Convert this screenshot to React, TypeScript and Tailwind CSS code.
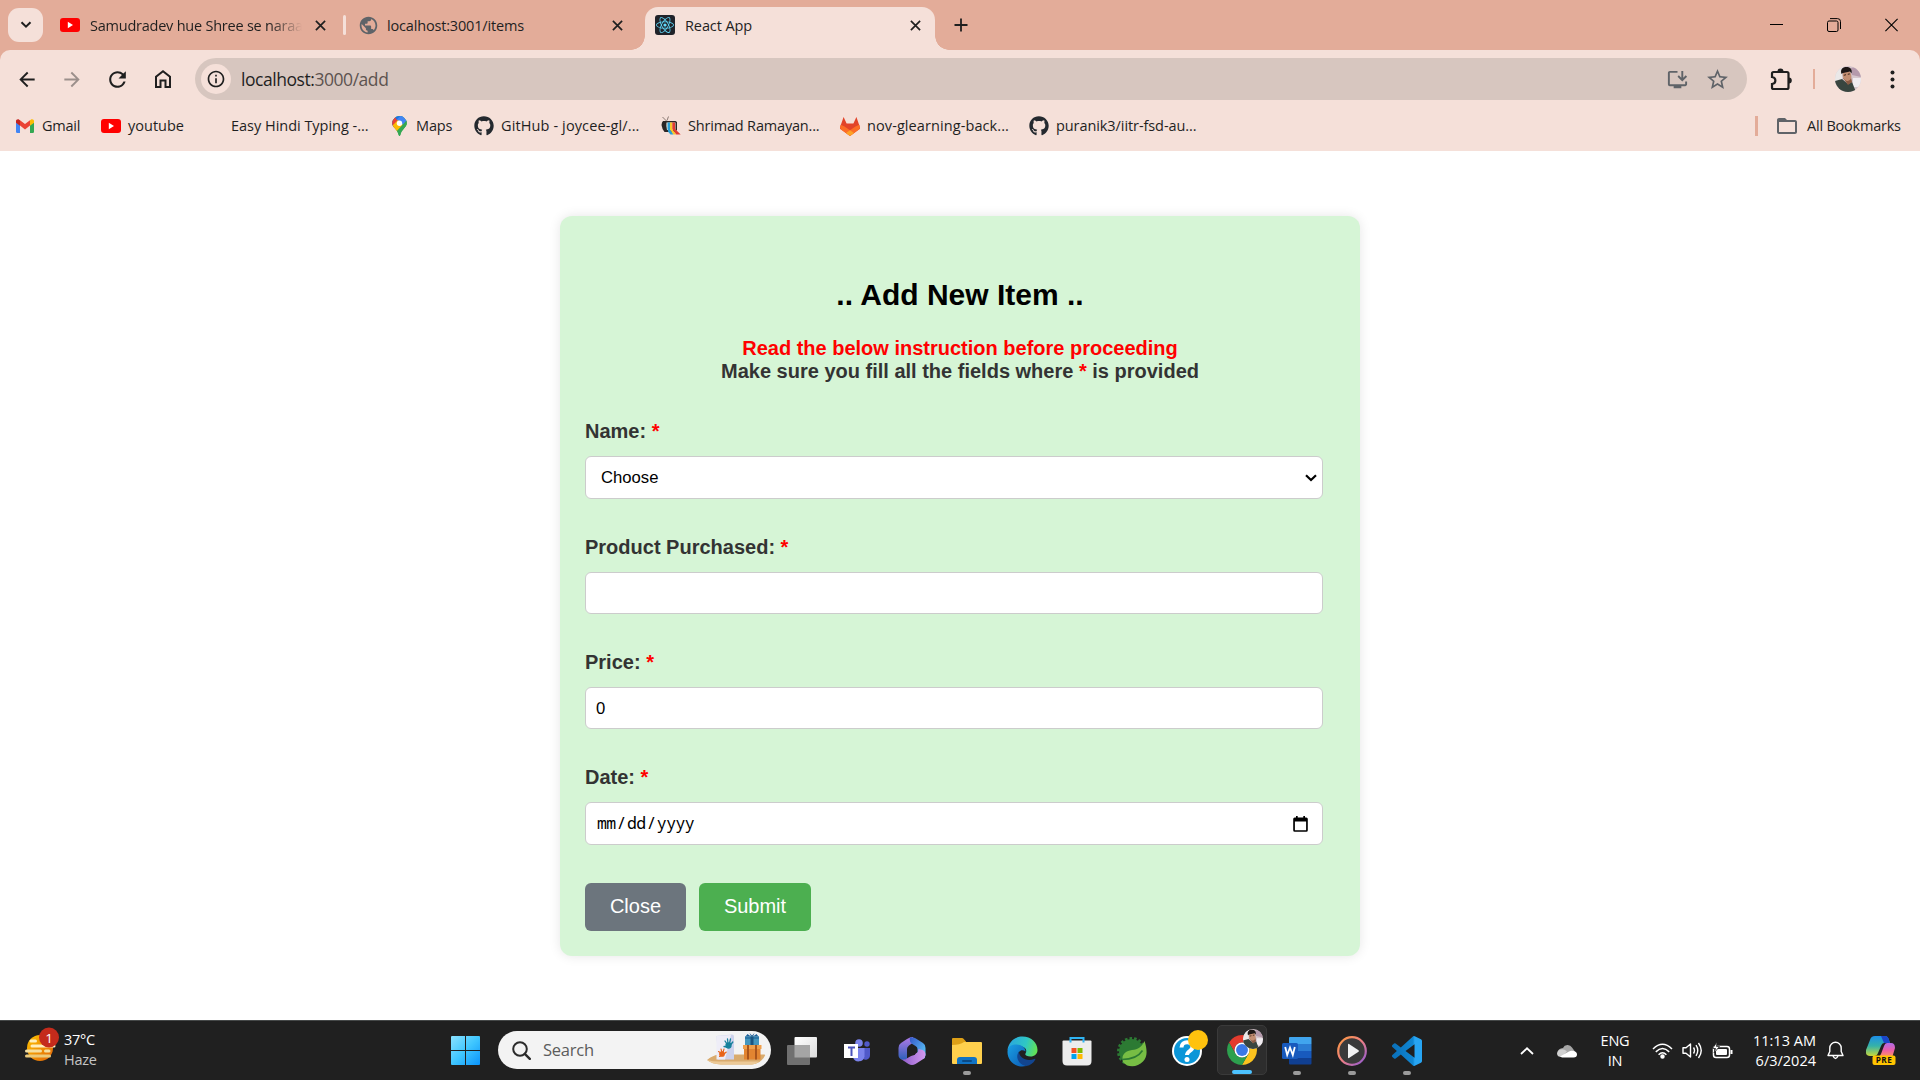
import React from "react";
import { FaGithub, FaReact } from "react-icons/fa";
import {
  MdArrowBack,
  MdArrowForward,
  MdInfoOutline,
  MdInstallDesktop,
  MdPublic,
  MdRefresh,
  MdStarBorder,
  MdFolderOpen,
} from "react-icons/md";

/* ---------- shared icons ---------- */

function YouTubeIcon() {
  return (
    <svg width="20" height="14" viewBox="0 0 20 14">
      <rect width="20" height="14" rx="3" fill="#ff0000" />
      <path d="M7.8 3.8v6.4L13 7z" fill="#fff" />
    </svg>
  );
}

function CrossIcon() {
  return (
    <svg width="11" height="11" viewBox="0 0 11 11" stroke="#1f1f1f" strokeWidth="1.7">
      <path d="M.9.9l9.2 9.2M10.1.9L.9 10.1" />
    </svg>
  );
}

function GmailIcon() {
  return (
    <svg width="18" height="14" viewBox="0 0 18 14">
      <path d="M0 3v9.8A1.2 1.2 0 0 0 1.2 14H4V6z" fill="#4285f4" />
      <path d="M18 3v9.8a1.2 1.2 0 0 1-1.2 1.2H14V6z" fill="#34a853" />
      <path d="M4 1.3v5.3l5 3.8 5-3.8V1.3L9 5.1z" fill="#ea4335" />
      <path d="M0 2.1v1.6l4 3V1.3L3.2.7C1.900-.3 0 .5 0 2.1z" fill="#c5221f" />
      <path d="M18 2.1v1.6l-4 3V1.3l.8-.6C16.100-.3 18 .5 18 2.1z" fill="#fbbc04" />
    </svg>
  );
}

function MapsIcon() {
  return (
    <svg width="15" height="20" viewBox="0 0 15 20">
      <defs>
        <clipPath id="pin">
          <path d="M7.500 0A7.300 7.300 0 0 0 .2 7.300C.2 11.500 5.600 13.500 6.600 18.800q.9 2.400 1.800 0C9.400 13.500 14.800 11.500 14.800 7.300A7.300 7.300 0 0 0 7.500 0z" />
        </clipPath>
      </defs>
      <g clipPath="url(#pin)">
        <rect width="15" height="20" fill="#34a853" />
        <path d="M-1 14L15 -2H-1z" fill="#1a73e8" />
        <path d="M4 4.500L10 -2h6v6L7 14z" fill="#4285f4" />
        <path d="M-2 0l5 1 4 6-6 7z" fill="#ea4335" />
        <path d="M-1 11L6 4l5 5-7 8z" fill="#fbbc04" />
        <path d="M3 17l12-13v16H3z" fill="#34a853" />
      </g>
      <circle cx="7.500" cy="7.200" r="2.700" fill="#fff" />
    </svg>
  );
}

function TvIcon() {
  return (
    <svg width="20" height="20" viewBox="0 0 20 20">
      <path d="M5.500 5L1.500 1M6 4.500L7.500 .5" stroke="#8a7a74" fill="none" />
      <path d="M2 5h12.500l1.500 1v8l-2 2H3.500Q1 13 .5 9 .8 6 2 5z" fill="#2b2625" />
      <path d="M5.500 6.500h9v7.500H6q-1-4-.5-7.500z" fill="#f2efe2" />
      <path d="M6.500 6.500H9V13l3.500 5.500H9.500Q6.500 16 6.500 13z" fill="#2b9fd6" />
      <path d="M9 6.500h2.300V13l4 5.500h-2.800L9 13.500z" fill="#f5c62c" />
      <path d="M11.300 6.500h2.700V13l5.700 5.500h-4.400l-4-5.500z" fill="#e03a33" />
    </svg>
  );
}

function GitLabIcon() {
  return (
    <svg width="20" height="19" viewBox="0 0 20 19">
      <path d="M3.600 0L.3 9.500 0 11.800 10 19l10-7.200-.3-2.300L16.400 0l-3 6.500H6.600z" fill="#e24329" />
      <path d="M.7 7.700q3 .8 9.300 5.500 6.300-4.700 9.300-5.500.9 2.700 0 4.500L10 19 .7 12.200q-.9-2 0-4.500z" fill="#fc6d26" />
      <path d="M10 13.200l4 2.900-4 2.900-4-2.900z" fill="#fca326" />
    </svg>
  );
}

function Portrait({ size, id }: { size: number; id: string }) {
  return (
    <svg width={size} height={size} viewBox="0 0 26 26">
      <clipPath id={id}>
        <circle cx="13" cy="13" r="13" />
      </clipPath>
      <g clipPath={`url(#${id})`}>
        <rect width="26" height="26" fill="#d5c6cd" />
        <path d="M0 0h8l-1 15H0z" fill="#eae8e8" />
        <path d="M16 2l10-2v11l-9-2z" fill="#b59aac" />
        <path d="M18 12h8v9h-8z" fill="#f0ecf0" />
        <path d="M0 15l7-2 6 5 4-2 4 10H0z" fill="#39453f" />
        <path d="M8 12l8-1 1 5-4 3z" fill="#8d5b43" />
        <ellipse cx="12" cy="9.500" rx="4.300" ry="5.500" fill="#c38e72" transform="rotate(-14 12 9.500)" />
        <path d="M6.500 8C5 3.500 7.500 1 11.500 1c4 0 6 2.500 5 6.500L15 5.500 8 7z" fill="#1d1716" />
        <path d="M8.800 9.300l2.200-.6M12.800 8.300l2-.4" stroke="#3a2219" strokeWidth="1" />
      </g>
    </svg>
  );
}

/* ---------- browser chrome ---------- */

function TabStrip() {
  return (
    <div className="flex h-[50px] bg-[#e3ac99] text-[14.5px] leading-[20px] text-[#1f1f1f]">
      <div className="ml-2 mt-2 flex h-[34px] w-[35px] items-center justify-center rounded-[11px] bg-[#f5e0d9]">
        <svg width="12" height="8" viewBox="0 0 12 8" fill="none" stroke="#1f1f1f" strokeWidth="2">
          <path d="M1.500 1.200L6 5.700l4.500-4.500" />
        </svg>
      </div>
      <div className="ml-[17px] flex w-[283px] items-center">
        <YouTubeIcon />
        <div className="ml-[10px] w-[212px] whitespace-nowrap pt-[2px] tracking-[-0.23px] [mask-image:linear-gradient(to_right,black_180px,transparent_212px)]">
          Samudradev hue Shree se naraa
        </div>
        <div className="ml-[13px]">
          <CrossIcon />
        </div>
      </div>
      <div className="mt-[15px] h-5 w-[3px] rounded-sm bg-[#f5e0d9]" />
      <div className="ml-[12px] flex w-[287px] items-center">
        <MdPublic size={21} color="#5f6368" />
        <div className="ml-[8px] w-[225px] whitespace-nowrap pt-[2px] tracking-[-0.17px]">localhost:3001/items</div>
        <CrossIcon />
      </div>
      <div className="flex h-[50px] items-end">
        <div className="-ml-[14px] h-[14px] w-[14px] bg-[radial-gradient(circle_at_0_0,transparent_13.500px,#f5e0d9_14px)]" />
        <div className="flex h-[43px] w-[290px] items-center rounded-t-[13px] bg-[#f5e0d9] pb-[7px]">
          <div className="ml-[10px] flex h-5 w-5 items-center justify-center rounded-[3px] bg-[#20232a]">
            <FaReact size={18} color="#61dafb" />
          </div>
          <div className="ml-[10px] w-[225px] pt-[2px] tracking-[-0.1px]">React App</div>
          <CrossIcon />
        </div>
        <div className="h-[14px] w-[14px] bg-[radial-gradient(circle_at_100%_0,transparent_13.500px,#f5e0d9_14px)]" />
      </div>
      <svg className="mt-[18px] ml-[5px]" width="14" height="14" viewBox="0 0 14 14" stroke="#1f1f1f" strokeWidth="1.800">
        <path d="M7 .5v13M.5 7h13" />
      </svg>
      <div className="ml-auto mr-[22px] flex items-center gap-[44px]">
        <svg width="13" height="14" viewBox="0 0 13 14" stroke="#000">
          <path d="M0 6.500h13" />
        </svg>
        <svg width="14" height="14" viewBox="0 0 14 14" fill="none" stroke="#000">
          <rect x=".5" y="3" width="10.500" height="10.500" rx="1.500" />
          <path d="M3 .6h7.500a3 3 0 0 1 3 3V11" />
        </svg>
        <svg width="13" height="14" viewBox="0 0 13 14" stroke="#000" strokeWidth="1.100">
          <path d="M.4.9l12.200 12.200M12.600.9L.4 13.100" />
        </svg>
      </div>
    </div>
  );
}

function Toolbar() {
  return (
    <div className="flex h-[58px] items-center text-[#1f1f1f]">
      <div className="flex w-[195px] items-center pl-[15px]">
        <MdArrowBack size={23} className="w-[24px]" />
        <MdArrowForward size={23} className="ml-[21px] w-[24px] text-[#9b8f8b]" />
        <MdRefresh size={25} className="ml-[21px]" />
        <svg className="ml-[24px]" width="18" height="20" viewBox="0 0 18 20" fill="none" stroke="#1f1f1f" strokeWidth="2">
          <path d="M2 18V7.700L9 2.200l7 5.500V18h-4.500v-6.500h-5V18z" />
        </svg>
      </div>
      <div className="flex h-[42px] w-[1552px] items-center rounded-full bg-[#d7c6bf] pl-[6px]">
        <div className="flex h-[30px] w-[30px] items-center justify-center rounded-full bg-[#f5e0d9]">
          <MdInfoOutline size={20} />
        </div>
        <div className="ml-[10px] text-[17.500px] tracking-[-0.450px]">
          localhost:<span className="text-[#5d5350]">3000/add</span>
        </div>
        <div className="ml-auto mr-[17px] flex items-center gap-[16px] text-[#5f6368]">
          <MdInstallDesktop size={23} />
          <MdStarBorder size={25} />
        </div>
      </div>
      <svg className="ml-[23px]" width="23" height="23" viewBox="0 0 23 23" fill="none" stroke="#1f1f1f" strokeWidth="2.200">
        <path d="M3.500 4h13.500a1.500 1.500 0 0 1 1.500 1.500v14a1.500 1.500 0 0 1-1.500 1.500H3.500A1.500 1.500 0 0 1 2 19.500V16c4.500-.5 4.500-6.500 0-7V5.500A1.500 1.500 0 0 1 3.500 4z" />
        <path d="M7.500 3.500a3 3 0 0 1 6 0zM18.800 9.500a3 3 0 0 1 0 6z" fill="#1f1f1f" stroke="none" />
      </svg>
      <div className="ml-[20px] h-5 w-[2px] bg-[#e3ac99]" />
      <div className="ml-[20px]">
        <Portrait size={26} id="profile" />
      </div>
      <svg className="ml-[29px]" width="5" height="19" viewBox="0 0 5 19" fill="#1f1f1f">
        <circle cx="2.500" cy="2.500" r="2" />
        <circle cx="2.500" cy="9.500" r="2" />
        <circle cx="2.500" cy="16.500" r="2" />
      </svg>
    </div>
  );
}

const bookmarks = [
  { label: "Gmail", icon: <GmailIcon />, cell: "w-[86px]", text: "tracking-[-0.250px]" },
  { label: "youtube", icon: <YouTubeIcon />, cell: "w-[103px]", text: "" },
  { label: "Easy Hindi Typing -...", icon: null, cell: "w-[185px]", text: "tracking-[-0.020px]" },
  { label: "Maps", icon: <MapsIcon />, cell: "w-[85px]", text: "tracking-[-0.150px]" },
  { label: "GitHub - joycee-gl/...", icon: <FaGithub size={20} color="#24292f" />, cell: "w-[187px]", text: "tracking-[0.120px]" },
  { label: "Shrimad Ramayan...", icon: <TvIcon />, cell: "w-[179px]", text: "tracking-[-0.180px]" },
  { label: "nov-glearning-back...", icon: <GitLabIcon />, cell: "w-[189px]", text: "tracking-[0.090px]" },
  { label: "puranik3/iitr-fsd-au...", icon: <FaGithub size={20} color="#24292f" />, cell: "w-[180px]", text: "tracking-[-0.080px]" },
];

function BookmarksBar() {
  return (
    <div className="flex h-[43px] items-center pb-[7px] pl-[15px] text-[14.500px] text-[#1f1f1f]">
      {bookmarks.map((b) => (
        <div key={b.label} className={`flex shrink-0 items-center gap-[7px] ${b.cell}`}>
          <div className="flex w-5 shrink-0 justify-center">{b.icon}</div>
          <div className={`whitespace-nowrap ${b.text}`}>{b.label}</div>
        </div>
      ))}
      <div className="ml-auto flex items-center">
        <div className="h-5 w-[3px] bg-[#e3ac99]" />
        <MdFolderOpen size={24} color="#5f6368" className="ml-[17px]" />
        <div className="ml-[8px] w-[113px] whitespace-nowrap tracking-[-0.220px]">All Bookmarks</div>
      </div>
    </div>
  );
}

/* ---------- page ---------- */

function Label({ children }: { children: React.ReactNode }) {
  return (
    <div className="mb-[13px] h-[23px] text-[20px] font-bold leading-[23px] text-[#333]">
      {children} <span className="text-[#ff0000]">*</span>
    </div>
  );
}

const field = "flex w-[738px] items-center rounded-[6px] border border-[#ccc] bg-white text-[16.670px] text-black";

function ItemForm() {
  return (
    <div className="h-[740px] w-[800px] rounded-[12px] bg-[#d6f5d6] pl-[25px] pt-[61px] font-['Liberation_Sans',Arial,sans-serif] shadow-[0_0_12px_rgba(0,0,0,0.1)]">
      <div className="-ml-[25px] text-center font-bold">
        <h2 className="text-[30px] leading-[35px] text-black">.. Add New Item ..</h2>
        <p className="mt-[25px] text-[20px] leading-[23px] text-[#ff0000]">Read the below instruction before proceeding</p>
        <p className="text-[20px] leading-[23px] text-[#333]">
          Make sure you fill all the fields where <span className="text-[#ff0000]">*</span> is provided
        </p>
      </div>
      <div className="mt-[37px]">
        <Label>Name:</Label>
        <div className={`${field} h-[43px] justify-between pl-[15px] pr-[5px]`}>
          Choose
          <svg width="12" height="8" viewBox="0 0 12 8" fill="none" stroke="#000" strokeWidth="2.200">
            <path d="M1 1.200l5 4.800 5-4.800" />
          </svg>
        </div>
      </div>
      <div className="mt-[37px]">
        <Label>Product Purchased:</Label>
        <div className={`${field} h-[42px]`} />
      </div>
      <div className="mt-[37px]">
        <Label>Price:</Label>
        <div className={`${field} h-[42px] pl-[10px]`}>0</div>
      </div>
      <div className="mt-[37px]">
        <Label>Date:</Label>
        <div className={`${field} h-[43px] justify-between pl-[11px] pr-[14px]`}>
          <span className="flex font-['Noto_Sans_Mono','Liberation_Mono',monospace] text-[16.500px] tracking-[-0.600px]">
            <span>mm</span>
            <span className="mx-[1px]">/</span>
            <span>dd</span>
            <span className="mx-[1px]">/</span>
            <span>yyyy</span>
          </span>
          <svg width="15" height="16" viewBox="0 0 15 16" fill="#000">
            <path d="M3 0h1.700v1.500h5.600V0H12v1.500h1.300A1.500 1.500 0 0 1 14.800 3v11.300a1.500 1.500 0 0 1-1.500 1.500H1.700a1.500 1.500 0 0 1-1.500-1.500V3a1.500 1.500 0 0 1 1.500-1.500H3zM1.900 5.500v8.700h11.200V5.500z" />
          </svg>
        </div>
      </div>
      <div className="mt-[38px] flex gap-[13px] text-[20px] text-white">
        <div className="flex h-[48px] w-[101px] items-center justify-center rounded-[6px] bg-[#6c757d] pb-[2px]">Close</div>
        <div className="flex h-[48px] w-[112px] items-center justify-center rounded-[6px] bg-[#4caf50] pb-[2px]">Submit</div>
      </div>
    </div>
  );
}

/* ---------- taskbar ---------- */

function WeatherIcon() {
  return (
    <svg width="35" height="35" viewBox="0 0 35 35">
      <defs>
        <linearGradient id="sun" x1="0" y1="0" x2="1" y2="1">
          <stop offset="0" stopColor="#ffc400" />
          <stop offset="1" stopColor="#e0620a" />
        </linearGradient>
      </defs>
      <circle cx="15" cy="21" r="13" fill="url(#sun)" />
      <g strokeWidth="3" strokeLinecap="round" fill="none">
        <path d="M6 14h4.500M7 19h22" stroke="#ffeebc" />
        <path d="M1.500 24h14M20.500 24h3.500" stroke="#f5dfa0" />
        <path d="M1.500 29h23" stroke="#ecca7a" />
      </g>
      <circle cx="24" cy="10.500" r="10" fill="#c42b1c" />
      <text x="24" y="15.500" textAnchor="middle" fontSize="13.500" fill="#fff" fontFamily="Open Sans, sans-serif">
        1
      </text>
    </svg>
  );
}

function StartIcon() {
  return (
    <svg width="29" height="29" viewBox="0 0 29 29">
      <defs>
        <linearGradient id="win" x1="0" y1="0" x2="1" y2="1">
          <stop offset="0" stopColor="#8be2ff" />
          <stop offset=".5" stopColor="#3fc6ff" />
          <stop offset="1" stopColor="#0a93fb" />
        </linearGradient>
      </defs>
      <path d="M0 1q0-1 1-1h13v14H0zM15 0h13q1 0 1 1v13H15zM0 15h14v14H1q-1 0-1-1zM15 15h14v13q0 1-1 1H15z" fill="url(#win)" />
    </svg>
  );
}

function GiftArt() {
  return (
    <svg width="63" height="34" viewBox="0 0 63 34">
      <path d="M0 27q6-5 12-5.500h45.500q1 0 .5 1Q54 31 45 31.500H14Q5 31 0 27z" fill="#d9ab6e" />
      <path d="M0 27q6 1.500 12 1.500h40q-3 3-8 3H14Q5 31 0 27z" fill="#ecca98" />
      <path d="M9.500 3L25 1.500q2 0 2 2V26.500H11z" fill="#cdd2ec" />
      <path d="M9.500 3L24 2l-6 24.500h-8.500z" fill="#eeedf7" />
      <g stroke="#17819c" fill="#17819c" strokeWidth="1.300" strokeLinecap="round">
        <circle cx="21.500" cy="12.500" r="2.500" />
        <path d="M20 11l-2-3M21 10.500l-.5-4.500M22.500 10.500l1-4.500M23.500 12l2.300-3M20 14l-3-.5" fill="none" />
      </g>
      <g stroke="#e8641b" fill="#e8641b" strokeWidth="1.100" strokeLinecap="round">
        <circle cx="15" cy="21" r="2.300" />
        <path d="M14 20l-2.500-1.500M15 19.500l-1-3.500M16 19.500l1-3.500M17 21l2.300-2M14 22.500l-1.500 1" fill="none" />
      </g>
      <path d="M38.500 3.500l2-2.500 3.500 2.500-1.500-3.500 2.500 2.500L47.500 0 46 3.500 49.500 1l2 2.500z" fill="#1f5f98" />
      <path d="M38 3.500h14V12H38z" fill="#4596bd" />
      <path d="M38 3.500h14V6H38z" fill="#2d78a8" />
      <path d="M43.500 3.500h3V12h-3z" fill="#1a5580" />
      <path d="M36 12h18.500v4H36z" fill="#f0a04c" />
      <path d="M37 16h16.500v10.500H37z" fill="#e28531" />
      <path d="M40 12h2v14.500h-2zM48 12h2v14.500h-2z" fill="#a9551c" />
    </svg>
  );
}

function TaskViewIcon() {
  return (
    <svg width="30" height="28" viewBox="0 0 30 28">
      <defs>
        <linearGradient id="tv1" x1="0" y1="0" x2="1" y2="1">
          <stop offset="0" stopColor="#ffffff" />
          <stop offset="1" stopColor="#dcdcdc" />
        </linearGradient>
      </defs>
      <rect x="7.500" width="22.500" height="20.500" rx="1" fill="url(#tv1)" />
      <rect y="8" width="23" height="20" rx="1" fill="#707070" />
      <rect x="7.500" y="8" width="15.500" height="12.500" fill="#a5a5a5" />
    </svg>
  );
}

function TeamsIcon() {
  return (
    <svg width="27" height="24" viewBox="0 0 27 24">
      <circle cx="23" cy="5" r="2.700" fill="#5059c9" />
      <path d="M18 9h8v7a4.500 4.500 0 0 1-8 3z" fill="#5059c9" />
      <circle cx="15" cy="4" r="3.800" fill="#7b83eb" />
      <path d="M9 9h11.500v8.500a6 6 0 0 1-11.500 1z" fill="#7b83eb" />
      <rect y="5" width="14" height="14" fill="#fff" />
      <path d="M4 8.500h7M7.500 8.500v8.500" stroke="#4b53bc" strokeWidth="2" />
    </svg>
  );
}

function Microsoft365Icon() {
  return (
    <svg width="28" height="29" viewBox="0 0 28 29">
      <defs>
        <linearGradient id="m1" x1="0" y1="0" x2="0" y2="1">
          <stop offset="0" stopColor="#b27ae8" />
          <stop offset="1" stopColor="#2b5fb8" />
        </linearGradient>
        <linearGradient id="m2" x1="0" y1="0" x2="1" y2="1">
          <stop offset="0" stopColor="#3556c8" />
          <stop offset="1" stopColor="#5fd4ff" />
        </linearGradient>
        <linearGradient id="m3" x1="0" y1="0" x2="1" y2="0">
          <stop offset="0" stopColor="#8d5ac8" />
          <stop offset="1" stopColor="#d39af0" />
        </linearGradient>
      </defs>
      <path d="M15 0Q12 0 9 2L3 6Q.5 7.500.5 11v7q0 3 3 4.500 3 1.500 5.500-.5V12q0-2 2-3.500l5-3.500z" fill="url(#m1)" />
      <path d="M12 .500Q14-.3 17 1l8 5q2.500 1.500 2.500 5v7q0 3-2.500 4-3 0-5.500-3V12q0-2-2-3l-4-2.500Q11 4 12 .500z" fill="url(#m2)" />
      <path d="M3 22q4 1.500 6.500-1l9-5q2-1 2-4l4 1q3 1 3 5-.3 3-3 4.500l-7 4.500q-3.500 2-7 0z" fill="url(#m3)" />
      <circle cx="14" cy="14" r="4.500" fill="#202020" />
    </svg>
  );
}

function ExplorerIcon() {
  return (
    <svg width="30" height="28" viewBox="0 0 30 28">
      <path d="M0 2q0-1 1-1h9q1 0 1.500.7L14 4.500V10H0z" fill="#dea017" />
      <path d="M0 8q8 0 12-3h17q1 0 1 1v20q0 1-1 1H1q-1 0-1-1z" fill="#ffd04d" />
      <path d="M5 27v-4q0-3 3-3h14q3 0 3 3v4z" fill="#1173c4" />
      <rect x="10" y="23" width="10" height="2" rx="1" fill="#0a4a86" />
    </svg>
  );
}

function EdgeIcon() {
  return (
    <svg width="31" height="31" viewBox="0 0 31 31">
      <defs>
        <linearGradient id="e1" x1="0" y1=".3" x2="1" y2=".5">
          <stop offset="0" stopColor="#2aa5e0" />
          <stop offset=".6" stopColor="#2fc7c4" />
          <stop offset="1" stopColor="#62e255" />
        </linearGradient>
        <linearGradient id="e2" x1="0" y1="0" x2="1" y2="1">
          <stop offset="0" stopColor="#1aa0e4" />
          <stop offset="1" stopColor="#0c5bb5" />
        </linearGradient>
      </defs>
      <path d="M.5 14C1.500 6 7.500.5 15.500.5 24 .5 30.500 6.500 30.500 14c0 4-3 6.500-7 6.500-4 0-6-1.500-5-3 2-3 0-7-5-7C8 10 2 11 .5 14z" fill="url(#e1)" />
      <path d="M.5 16C.5 10 5 8.500 9.500 8.500c5 0 9 3 9 7-4-3-7.500 0-7.500 4 0 5 5 9 8.500 10.500C8 32.500.5 24.500.5 16z" fill="url(#e2)" />
      <path d="M12 15.500c-4 5-1 13 7.500 14.500 4-.6 7-3 8.800-6.500.3-.8-.4-1-1-.6C20 26 12 22 12 15.500z" fill="#12458f" />
    </svg>
  );
}

function StoreIcon() {
  return (
    <svg width="30" height="30" viewBox="0 0 30 30">
      <path d="M.5 5.500q0-1 1-1h27q1 0 1 1V25q0 4.500-4.500 4.500H5Q.5 29.500.5 25z" fill="#ececec" />
      <path d="M7.500 6.500V2h2v4.500zM20.500 2h2v4.500h-2zM7.500 1h15v2h-15z" fill="#2fb4f3" />
      <path d="M9.500 12h5v5h-5z" fill="#f25022" />
      <path d="M15.500 12h5v5h-5z" fill="#7fba00" />
      <path d="M9.500 18h5v5h-5z" fill="#00a4ef" />
      <path d="M15.500 18h5v5h-5z" fill="#ffb900" />
    </svg>
  );
}

function SpringIcon() {
  return (
    <svg width="30" height="31" viewBox="0 0 30 31">
      <circle cx="14.500" cy="15.500" r="12.500" fill="#2c7a33" />
      <circle cx="14.500" cy="15.500" r="13.200" fill="none" stroke="#2c7a33" strokeWidth="2.600" strokeDasharray="2.600 2" />
      <path d="M27.500 5c3 9 3 16-1.500 20.500-6 6.500-16 6-20 .5-2-7 2-11 9-12 6-.5 10-3 12.500-9z" fill="#77bd44" />
      <path d="M5 23.500c9 0 16-2 20.500-9" fill="none" stroke="#2c7a33" strokeWidth="1.600" />
    </svg>
  );
}

function HelpIcon() {
  return (
    <svg width="40" height="40" viewBox="0 0 40 40">
      <circle cx="18" cy="22" r="15" fill="#fff" />
      <circle cx="18" cy="22" r="13" fill="#0b96d8" />
      <path d="M12.500 18.500c0-7 11-7 11-.5 0 4-5.500 4-5.500 8" fill="none" stroke="#fff" strokeWidth="4" />
      <circle cx="18" cy="30.500" r="2.500" fill="#fff" />
      <circle cx="29" cy="11" r="10" fill="#ffc20e" />
    </svg>
  );
}

function ChromeIcon() {
  return (
    <svg width="30" height="30" viewBox="0 0 48 48">
      <path d="M24 12L44.780 12A24 24 0 0 0 3.220 12L13.610 30A12 12 0 0 1 24 12z" fill="#e33b2e" />
      <path d="M44.780 12A24 24 0 0 1 24 48L34.390 30A12 12 0 0 0 24 12z" fill="#fcc31e" />
      <path d="M3.220 12A24 24 0 0 0 24 48L34.390 30A12 12 0 0 1 13.610 30z" fill="#2da04e" />
      <circle cx="24" cy="24" r="12" fill="#fff" />
      <circle cx="24" cy="24" r="9.500" fill="#3b78e7" />
    </svg>
  );
}

function WordIcon() {
  return (
    <svg width="30" height="28" viewBox="0 0 30 28">
      <path d="M7 1q0-1 1-1h20.500q1 0 1 1v6H7z" fill="#41a5ee" />
      <path d="M7 7h22.500v7H7z" fill="#2b7cd3" />
      <path d="M7 14h22.500v7H7z" fill="#185abd" />
      <path d="M7 21h22.500v5.500q0 1-1 1H8q-1 0-1-1z" fill="#103f91" />
      <rect y="6" width="16" height="16" rx="1.500" fill="#185abd" />
      <path d="M3.200 10l2 8L8 10.500l2.800 7.500 2-8" fill="none" stroke="#fff" strokeWidth="1.800" />
    </svg>
  );
}

function MediaIcon() {
  return (
    <svg width="30" height="30" viewBox="0 0 30 30">
      <defs>
        <linearGradient id="ring" x1="0" y1="0" x2="1" y2="1">
          <stop offset="0" stopColor="#ff9a3c" />
          <stop offset=".5" stopColor="#ec7f86" />
          <stop offset="1" stopColor="#8a57d8" />
        </linearGradient>
      </defs>
      <circle cx="15" cy="15" r="13.800" fill="#3a3a3a" stroke="url(#ring)" strokeWidth="2.200" />
      <path d="M11 8.500q0-1 1-.5l9.500 6.300q.9.700 0 1.400L12 22q-1 .5-1-.5z" fill="#f2f2f2" />
    </svg>
  );
}

function VsCodeIcon() {
  return (
    <svg width="30" height="30" viewBox="0 0 24 24">
      <defs>
        <linearGradient id="code" x1="0" y1="0" x2="1" y2="0">
          <stop offset="0" stopColor="#0a6fb8" />
          <stop offset=".7" stopColor="#0f86d2" />
          <stop offset=".76" stopColor="#27a5f3" />
          <stop offset="1" stopColor="#27a5f3" />
        </linearGradient>
      </defs>
      <path
        fill="url(#code)"
        d="M23.150 2.587L18.210.210a1.494 1.494 0 0 0-1.705.290l-9.460 8.630-4.120-3.128a.999.999 0 0 0-1.276.057L.327 7.261A1 1 0 0 0 .326 8.740L3.899 12 .326 15.260a1 1 0 0 0 .001 1.479L1.650 17.940a.999.999 0 0 0 1.276.057l4.120-3.128 9.460 8.630a1.492 1.492 0 0 0 1.704.290l4.942-2.377A1.500 1.500 0 0 0 24 20.060V3.939a1.500 1.500 0 0 0-.850-1.352zm-5.146 14.861L10.826 12l7.178-5.448v10.896z"
      />
    </svg>
  );
}

function CopilotIcon() {
  return (
    <svg width="30" height="29" viewBox="0 0 30 29">
      <defs>
        <linearGradient id="cp1" x1="0" y1="0" x2="0" y2="1">
          <stop offset="0" stopColor="#1d8fe8" />
          <stop offset=".5" stopColor="#35b2a8" />
          <stop offset="1" stopColor="#c8d83a" />
        </linearGradient>
        <linearGradient id="cp2" x1="0" y1="0" x2="0" y2="1">
          <stop offset="0" stopColor="#b06be8" />
          <stop offset=".5" stopColor="#ee5fa5" />
          <stop offset="1" stopColor="#ffa052" />
        </linearGradient>
      </defs>
      <path d="M9 0h10q3 0 4 4l1 3h-6q-2 0-3 3l-3 7q-1 3-4 3H4q-5 0-4-6L4 4q1-4 5-4z" fill="url(#cp1)" />
      <path d="M15 0h4q3 0 4 4l1 3h-6z" fill="#1b45c8" />
      <path d="M21 7h4q4 0 4 5l-3 10H11q3-1 4-4l3-8q1-3 3-3z" fill="url(#cp2)" />
      <rect x="6.500" y="19.500" width="23" height="9.500" rx="2" fill="#ffc400" />
      <text x="18" y="27.300" textAnchor="middle" fontSize="8.200" fontWeight="700" letterSpacing=".4" fontFamily="Open Sans, sans-serif" fill="#111">
        PRE
      </text>
    </svg>
  );
}

function AppCell({ children, running = false }: { children: React.ReactNode; running?: boolean }) {
  return (
    <div className="relative flex h-[60px] w-[55px] items-center justify-center">
      {children}
      {running && <div className="absolute bottom-[6px] h-[4px] w-[8px] rounded-full bg-[#9a9a9a]" />}
    </div>
  );
}

function Taskbar() {
  return (
    <div className="flex h-[60px] border-t border-[#454848] bg-[#202020] text-white">
      <div className="flex w-[451px] pl-[25px] pt-[6px]">
        <WeatherIcon />
        <div className="ml-[4px] mt-[3px] text-[14.500px] leading-[20px] tracking-[-0.250px]">
          <div>37°C</div>
          <div className="text-[#c4c4c4]">Haze</div>
        </div>
      </div>
      <div className="mt-[15px] w-[47px]">
        <StartIcon />
      </div>
      <div className="mt-[10px] flex h-[38px] w-[273px] items-center rounded-full bg-[#f3f3f3] pl-[14px]">
        <svg width="19" height="19" viewBox="0 0 19 19" fill="none" stroke="#2b2b2b" strokeWidth="2">
          <circle cx="8" cy="8" r="6.800" />
          <path d="M12.800 12.800l5 5" strokeWidth="2.400" strokeLinecap="round" />
        </svg>
        <div className="ml-[12px] pt-[1px] text-[16.500px] tracking-[-0.250px] text-[#5c5c5c]">Search</div>
        <div className="ml-auto mr-[1px]">
          <GiftArt />
        </div>
      </div>
      <div className="ml-[3.500px] flex">
        <AppCell><TaskViewIcon /></AppCell>
        <AppCell><TeamsIcon /></AppCell>
        <AppCell><Microsoft365Icon /></AppCell>
        <AppCell running><ExplorerIcon /></AppCell>
        <AppCell><EdgeIcon /></AppCell>
        <AppCell><StoreIcon /></AppCell>
        <AppCell><SpringIcon /></AppCell>
        <AppCell>
          <div className="ml-[4px] mb-[4px]"><HelpIcon /></div>
        </AppCell>
        <div className="flex h-[60px] w-[55px] justify-center pt-[4px]">
          <div className="relative flex h-[50px] w-[50px] items-center justify-center rounded-[5px] border border-[#3a3a3a] bg-[#2d2d2d]">
            <ChromeIcon />
            <div className="absolute right-[3px] top-[3px]">
              <Portrait size={20} id="badge" />
            </div>
            <div className="absolute bottom-0 h-[4px] w-[20px] rounded-full bg-[#4cc2ff]" />
          </div>
        </div>
        <AppCell running><WordIcon /></AppCell>
        <AppCell running><MediaIcon /></AppCell>
        <AppCell running><VsCodeIcon /></AppCell>
      </div>
      <div className="ml-auto flex items-center pr-[24px]">
        <svg width="14" height="8" viewBox="0 0 14 8" fill="none" stroke="#fff" strokeWidth="1.800">
          <path d="M1 7l6-5.700L13 7" />
        </svg>
        <svg className="ml-[23px]" width="20" height="14" viewBox="0 0 20 14">
          <path d="M6 4a5 5 0 0 1 9-.5L19 9 8 12 1 8q0-3.500 5-4z" fill="#a6a6a6" />
          <path d="M0 9.500Q.3 5.500 5 5.200q2-.2 5 2L5 13q-5 0-5-3.500z" fill="#d0d0d0" />
          <path d="M3 12.500l9-5q2-1.200 4.500-.5 3.500.5 3.500 3.500T16.500 13.500H5z" fill="#fff" />
        </svg>
        <div className="ml-[22px] w-[32px] text-center text-[14.500px] leading-[20px] tracking-[-0.200px]">
          <div>ENG</div>
          <div>IN</div>
        </div>
        <svg className="ml-[21px]" width="21" height="16" viewBox="0 0 21 16" fill="none" stroke="#fff" strokeWidth="1.500">
          <path d="M1 6q9.500-9.500 19 0M3.800 8.900q6.700-6.700 13.400 0M6.600 11.700q3.900-3.900 7.800 0" />
          <circle cx="10.500" cy="13.500" r="1.500" fill="#fff" />
        </svg>
        <svg className="ml-[9px]" width="21" height="17" viewBox="0 0 21 17" fill="none" stroke="#fff" strokeWidth="1.400">
          <path d="M1 5.800h3L8.500 2v13L4 11.200H1z" strokeLinejoin="round" />
          <path d="M11.500 5.500q2 3 0 6M14 3.200q3.500 5.300 0 10.600M16.500 1q5.500 7.500 0 15" />
        </svg>
        <svg className="ml-[9px]" width="21" height="17" viewBox="0 0 21 17" fill="none" stroke="#fff" strokeWidth="1.500">
          <rect x="1.500" y="4.500" width="16" height="11" rx="2.500" />
          <rect x="4" y="7" width="11" height="6" rx="1" fill="#fff" stroke="none" />
          <path d="M19.500 8v4" strokeWidth="2" />
          <path d="M5 0L.5 6.500h3L2 11l5.500-6.500h-3z" fill="#fff" stroke="#202020" strokeWidth=".8" />
        </svg>
        <div className="ml-[11px] w-[72px] whitespace-nowrap text-[14.500px] leading-[20px]">
          <div className="flex justify-end tracking-[0.020px]">11:13 AM</div>
          <div className="flex justify-end">6/3/2024</div>
        </div>
        <svg className="ml-[11px]" width="17" height="19" viewBox="0 0 17 19" fill="none" stroke="#fff" strokeWidth="1.400">
          <path d="M2.800 10.500V7a5.700 5.700 0 0 1 11.400 0v3.500l1.800 4H1z" strokeLinejoin="round" />
          <path d="M6 15q2.500 5 5 0" />
        </svg>
        <div className="ml-[22px]">
          <CopilotIcon />
        </div>
      </div>
    </div>
  );
}

export default function App() {
  return (
    <div className="flex h-[1080px] w-[1920px] flex-col overflow-hidden bg-white font-['Open_Sans','Noto_Sans',sans-serif]">
      <TabStrip />
      <div className="bg-[#e3ac99]">
        <div className="rounded-t-[10px] bg-[#f5e0d9]">
          <Toolbar />
          <BookmarksBar />
        </div>
      </div>
      <div className="flex flex-1 justify-center pt-[65px]">
        <ItemForm />
      </div>
      <Taskbar />
    </div>
  );
}
